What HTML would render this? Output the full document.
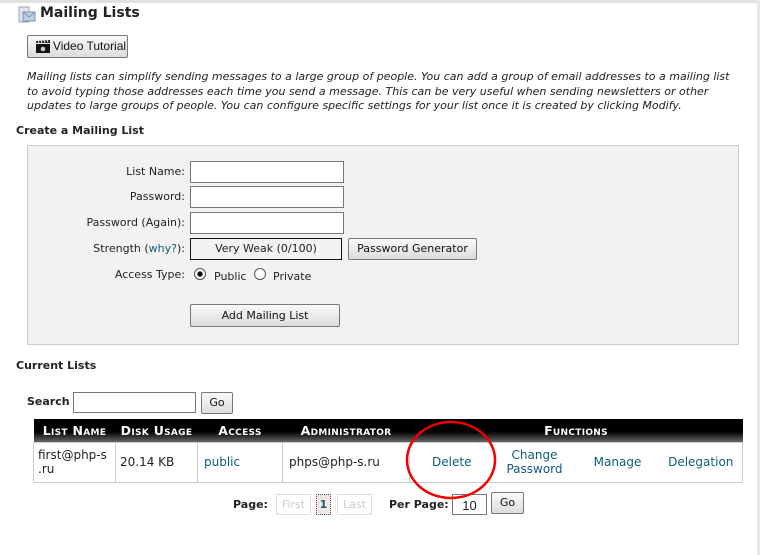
<!DOCTYPE html>
<html><head><meta charset="utf-8"><style>
*{box-sizing:border-box;margin:0;padding:0}
body{width:760px;height:555px;background:#fff;position:relative;overflow:hidden;font-family:"DejaVu Sans","Liberation Sans",sans-serif;font-size:11px;color:#222}
.a{position:absolute;white-space:nowrap}
.btn{position:absolute;border:1px solid #777;border-radius:2px;background:linear-gradient(#fafafa,#dcdcdc);text-align:center;font-size:11px;color:#111;white-space:nowrap}
.inp{position:absolute;border:1px solid #777;background:#fff}
.lbl{position:absolute;text-align:right;width:160px;left:25px}
.lnk{color:#0e5d75}
th{color:#fff;font-variant:small-caps;font-weight:bold;font-size:12.5px;letter-spacing:0.3px}
</style></head><body>
<div class="a" style="left:0;top:0;width:760px;height:3px;background:#e0e0e0"></div>
<div class="a" style="left:757px;top:0;width:3px;height:555px;background:#e6e6e6"></div>
<svg class="a" style="left:18px;top:6px" width="18" height="18" viewBox="0 0 18 18"><rect x="1" y="1" width="10" height="15" fill="#dde4ec" stroke="#9aa6b4"/><rect x="5" y="6" width="12" height="9" fill="#bcd0e6" stroke="#7c94b0"/><path d="M5 6l6 5 6-5" fill="none" stroke="#7c94b0"/></svg>
<div class="a" style="left:40px;top:5px;font-size:14px;font-weight:bold">Mailing Lists</div>
<div class="btn" style="left:27px;top:35px;width:101px;height:23px;font-family:'Liberation Sans',sans-serif;font-size:12px;line-height:21px;padding-left:24px">Video Tutorial</div>
<svg class="a" style="left:35px;top:39px" width="16" height="15" viewBox="0 0 16 15"><rect x="1" y="5" width="14" height="9" fill="#111"/><path d="M1 2l14-1v3H1z" fill="#222"/><path d="M3 1.8l1 2M6 1.6l1 2M9 1.4l1 2M12 1.2l1 2" stroke="#fff"/><circle cx="8" cy="10" r="2.3" fill="#ccc"/></svg>
<div class="a" style="left:27px;top:70px;font-style:italic;font-size:11px;line-height:14.5px;white-space:normal;width:708px">Mailing lists can simplify sending messages to a large group of people. You can add a group of email addresses to a mailing list to avoid typing those addresses each time you send a message. This can be very useful when sending newsletters or other updates to large groups of people. You can configure specific settings for your list once it is created by clicking Modify.</div>
<div class="a" style="left:16px;top:124px;font-weight:bold">Create a Mailing List</div>
<div class="a" style="left:27px;top:145px;width:712px;height:200px;background:#f2f2f2;border:1px solid #ccc"></div>
<div class="lbl" style="top:165px">List Name:</div><div class="inp" style="left:190px;top:161px;width:154px;height:22px"></div>
<div class="lbl" style="top:190px">Password:</div><div class="inp" style="left:190px;top:186px;width:154px;height:22px"></div>
<div class="lbl" style="top:216px">Password (Again):</div><div class="inp" style="left:190px;top:212px;width:154px;height:22px"></div>
<div class="lbl" style="top:242px">Strength (<span class="lnk">why?</span>):</div>
<div class="a" style="left:190px;top:238px;width:152px;height:22px;border:1px solid #111;text-align:center;line-height:20px">Very Weak (0/100)</div>
<div class="btn" style="left:348px;top:238px;width:129px;height:22px;line-height:20px">Password Generator</div>
<div class="lbl" style="top:268px">Access Type:</div>
<svg class="a" style="left:193px;top:267px" width="14" height="14"><circle cx="7" cy="7" r="5.5" fill="#fff" stroke="#555"/><circle cx="7" cy="7" r="2.7" fill="#111"/></svg>
<div class="a" style="left:214px;top:270px">Public</div>
<svg class="a" style="left:253px;top:267px" width="14" height="14"><circle cx="7" cy="7" r="5.5" fill="#fff" stroke="#555"/></svg>
<div class="a" style="left:273px;top:270px">Private</div>
<div class="btn" style="left:190px;top:304px;width:150px;height:23px;line-height:21px">Add Mailing List</div>
<div class="a" style="left:16px;top:359px;font-weight:bold">Current Lists</div>
<div class="a" style="left:27px;top:395px;font-weight:bold">Search</div>
<div class="inp" style="left:73px;top:392px;width:123px;height:21px"></div>
<div class="btn" style="left:201px;top:392px;width:32px;height:22px;line-height:20px">Go</div>
<table class="a" style="left:33px;top:419px;width:710px;border-collapse:collapse;font-size:12px">
<tr style="height:23px;background:linear-gradient(#000 55%,#666)"><th style="width:82px">List Name</th><th style="width:82px">Disk Usage</th><th style="width:85px">Access</th><th style="width:127px">Administrator</th><th colspan="4">Functions</th></tr>
<tr style="height:40px">
<td style="border:1px solid #ccc;padding-left:4px;line-height:14px">first@php-s<br>.ru</td>
<td style="border:1px solid #ccc;padding-left:4px">20.14 KB</td>
<td style="border:1px solid #ccc;padding-left:6px" class="lnk">public</td>
<td style="border:1px solid #ccc;padding-left:6px">phps@php-s.ru</td>
<td style="border-top:1px solid #ccc;border-bottom:1px solid #ccc;width:84px;text-align:center" class="lnk">Delete</td>
<td style="border-top:1px solid #ccc;border-bottom:1px solid #ccc;width:82px;text-align:center;line-height:14px" class="lnk">Change<br>Password</td>
<td style="border-top:1px solid #ccc;border-bottom:1px solid #ccc;width:84px;text-align:center" class="lnk">Manage</td>
<td style="border:1px solid #ccc;border-left:none;text-align:center" class="lnk">Delegation</td></tr>
</table>
<div class="a" style="left:233px;top:498px;font-weight:bold">Page:</div>
<div class="a" style="left:276px;top:494px;width:35px;height:21px;border:1px solid #ddd;color:#ccc;text-align:center;line-height:19px">First</div>
<div class="a" style="left:316px;top:494px;width:15px;height:21px;border:1px dotted #555;background:#f1e6e2;color:#0e5d75;font-weight:bold;text-align:center;line-height:19px">1</div>
<div class="a" style="left:337px;top:494px;width:35px;height:21px;border:1px solid #ddd;color:#ccc;text-align:center;line-height:19px">Last</div>
<div class="a" style="left:389px;top:498px;font-weight:bold">Per Page:</div>
<div class="inp" style="left:452px;top:494px;width:35px;height:21px;font-family:'Liberation Sans',sans-serif;font-size:13px;text-align:center;line-height:21px">10</div>
<div class="btn" style="left:491px;top:492px;width:33px;height:22px;line-height:20px">Go</div>
<svg class="a" style="left:400px;top:415px" width="104" height="90"><ellipse cx="51" cy="45" rx="44" ry="38" fill="none" stroke="#e00" stroke-width="2.5"/></svg>
</body></html>
